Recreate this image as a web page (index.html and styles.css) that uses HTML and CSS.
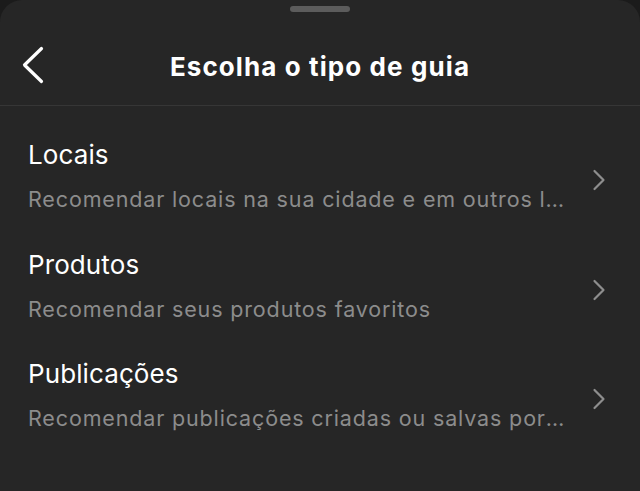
FILE: index.html
```html
<!DOCTYPE html>
<html lang="pt-BR">
<head>
<meta charset="utf-8">
<title>Escolha o tipo de guia</title>
<link rel="stylesheet" href="styles.css">
</head>
<body>
<div class="sheet">
  <div class="grabber"></div>
  <header class="nav">
    <button class="back" aria-label="Voltar">
      <svg width="26" height="42" viewBox="0 0 26 42"><path d="M21.5 4.5 L4.5 21 L21.5 37.5" fill="none" stroke="#fff" stroke-width="3.2" stroke-linecap="round" stroke-linejoin="round"/></svg>
    </button>
    <h1 class="title">Escolha o tipo de guia</h1>
  </header>
  <ul class="options">
    <li class="option">
      <div class="text">
        <div class="label">Locais</div>
        <div class="desc">Recomendar locais na sua cidade e em outros lugares do mundo</div>
      </div>
      <svg class="chev" width="14" height="22" viewBox="0 0 14 22"><path d="M2.5 2 L11.5 11 L2.5 20" fill="none" stroke="#8e8e8e" stroke-width="2.2" stroke-linecap="round" stroke-linejoin="round"/></svg>
    </li>
    <li class="option">
      <div class="text">
        <div class="label">Produtos</div>
        <div class="desc">Recomendar seus produtos favoritos</div>
      </div>
      <svg class="chev" width="14" height="22" viewBox="0 0 14 22"><path d="M2.5 2 L11.5 11 L2.5 20" fill="none" stroke="#8e8e8e" stroke-width="2.2" stroke-linecap="round" stroke-linejoin="round"/></svg>
    </li>
    <li class="option">
      <div class="text">
        <div class="label">Publicações</div>
        <div class="desc">Recomendar publicações criadas ou salvas por você</div>
      </div>
      <svg class="chev" width="14" height="22" viewBox="0 0 14 22"><path d="M2.5 2 L11.5 11 L2.5 20" fill="none" stroke="#8e8e8e" stroke-width="2.2" stroke-linecap="round" stroke-linejoin="round"/></svg>
    </li>
  </ul>
</div>
</body>
</html>
```

FILE: styles.css
```css
html, body {
  margin: 0;
  padding: 0;
  background: #1b1b1b;
  height: 100%;
}
body {
  font-family: Inter, "Noto Sans", sans-serif;
  color: #fff;
  overflow: hidden;
}
.sheet {
  background: #262626;
  border-radius: 22px 22px 0 0;
  height: 491px;
  display: flex;
  flex-direction: column;
}
.grabber {
  width: 60px;
  height: 6px;
  border-radius: 3px;
  background: #5c5c5c;
  margin: 6px auto 0;
}
.nav {
  position: relative;
  height: 94px;
  box-sizing: border-box;
  display: flex;
  justify-content: center;
  align-items: flex-start;
  padding-top: 40px;
  border-bottom: 1px solid #363636;
}
.back {
  position: absolute;
  left: 20px;
  top: 32px;
  background: none;
  border: 0;
  padding: 0;
  display: flex;
}
.title {
  margin: 0;
  font-size: 26px;
  line-height: 30px;
  font-weight: 700;
  letter-spacing: 1.1px;
}
.options {
  list-style: none;
  margin: 0;
  padding: 34px 0 0;
}
.option {
  display: flex;
  align-items: flex-start;
  height: 109.5px;
  padding: 0 34px 0 28px;
}
.text {
  flex: 1;
  min-width: 0;
  padding-right: 23px;
}
.label {
  font-size: 26px;
  line-height: 30px;
  letter-spacing: 0.1px;
}
.desc {
  margin-top: 16px;
  font-size: 21.5px;
  line-height: 26px;
  letter-spacing: 0.85px;
  color: #8c8c8c;
  white-space: nowrap;
  overflow: hidden;
  text-overflow: ellipsis;
}
.chev {
  flex: none;
  margin-top: 29px;
}
```
